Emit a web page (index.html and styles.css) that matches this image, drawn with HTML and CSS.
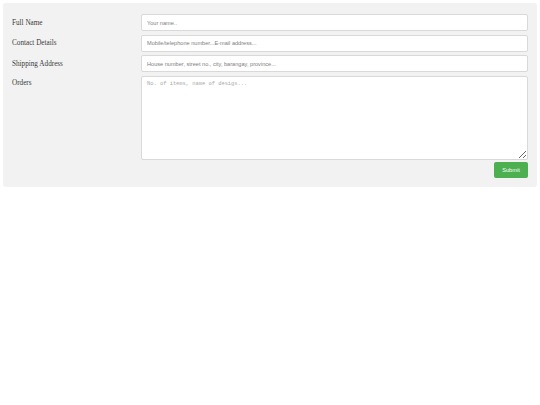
FILE: index.html
```
<!DOCTYPE html>
<html>
<head>
<meta charset="utf-8">
<link rel="stylesheet" href="styles.css">
</head>
<body>
<div class="container">
  <form class="form">
    <label class="label" for="fname">Full Name</label>
    <input class="field" id="fname" type="text" placeholder="Your name..">
    <label class="label" for="contact">Contact Details</label>
    <input class="field" id="contact" type="text" placeholder="Mobile/telephone number...E-mail address...">
    <label class="label" for="addr">Shipping Address</label>
    <input class="field" id="addr" type="text" placeholder="House number, street no., city, barangay, province...">
    <label class="label label-top" for="orders">Orders</label>
    <textarea class="area" id="orders" placeholder="No. of items, name of desigs..."></textarea>
    <div class="actions">
      <button class="submit" type="button">Submit</button>
    </div>
  </form>
</div>
</body>
</html>
```

FILE: styles.css
```
html, body {
  margin: 0;
  padding: 0;
  background: #ffffff;
}
body {
  padding: 3px;
}
.container {
  background: #f2f2f2;
  border-radius: 3px;
  padding: 11px 9px 8.5px 9px;
}
.form {
  display: grid;
  grid-template-columns: 129px 1fr;
  row-gap: 3.5px;
  align-items: center;
}
.label {
  font-family: "Liberation Serif", "Times New Roman", serif;
  font-size: 7.2px;
  font-weight: normal;
  color: #3a3a3a;
}
.label-top {
  align-self: start;
  padding-top: 3px;
}
.field {
  box-sizing: border-box;
  height: 17px;
  width: 100%;
  margin: 0;
  border: 1px solid #d9d9d9;
  border-radius: 2px;
  background: #fff;
  padding: 0 5px;
  font-family: "Liberation Sans", Arial, sans-serif;
  font-size: 5.6px;
  outline: none;
}
.field::placeholder {
  color: #808080;
}
.area {
  box-sizing: border-box;
  height: 84px;
  width: 100%;
  margin: 0;
  border: 1px solid #d9d9d9;
  border-radius: 2px;
  background: #fff;
  padding: 4px 5px;
  font-family: "Liberation Mono", "Courier New", monospace;
  font-size: 5.4px;
  resize: vertical;
  outline: none;
}
.area::placeholder {
  color: #aaa;
}
.actions {
  grid-column: 1 / 3;
  display: flex;
  justify-content: flex-end;
  margin-top: -1.5px;
}
.submit {
  width: 34px;
  height: 16.5px;
  padding: 0;
  border: none;
  border-radius: 2px;
  background: #4caf50;
  color: #fff;
  font-family: "Liberation Sans", Arial, sans-serif;
  font-size: 5.6px;
}
```
